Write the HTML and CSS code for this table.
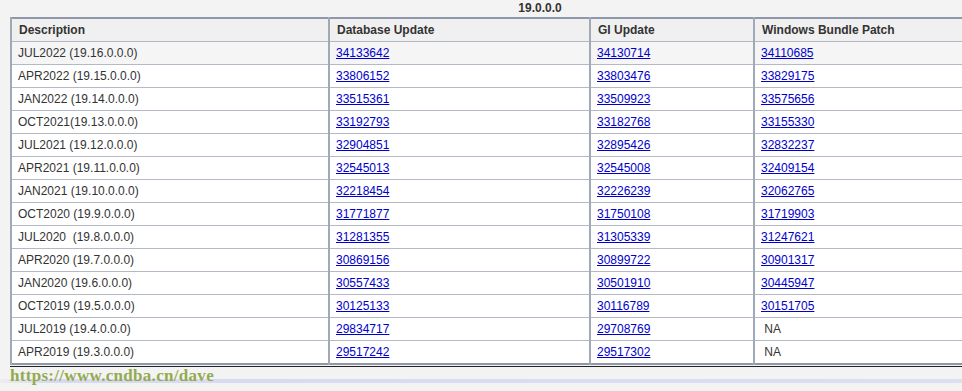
FILE: index.html
```html
<!DOCTYPE html>
<html>
<head>
<meta charset="utf-8">
<link rel="stylesheet" href="styles.css">
</head>
<body>
<div class="frame">
<div class="wrap">
  <div class="title">19.0.0.0</div>
  <table class="patches">
    <colgroup>
      <col class="c1"><col class="c2"><col class="c3"><col class="c4">
    </colgroup>
    <thead>
      <tr><th>Description</th><th>Database Update</th><th>GI Update</th><th>Windows Bundle Patch</th></tr>
    </thead>
    <tbody>
      <tr class="first"><td>JUL2022 (19.16.0.0.0)</td><td><a href="#">34133642</a></td><td><a href="#">34130714</a></td><td><a href="#">34110685</a></td></tr>
      <tr><td>APR2022 (19.15.0.0.0)</td><td><a href="#">33806152</a></td><td><a href="#">33803476</a></td><td><a href="#">33829175</a></td></tr>
      <tr><td>JAN2022 (19.14.0.0.0)</td><td><a href="#">33515361</a></td><td><a href="#">33509923</a></td><td><a href="#">33575656</a></td></tr>
      <tr><td>OCT2021(19.13.0.0.0)</td><td><a href="#">33192793</a></td><td><a href="#">33182768</a></td><td><a href="#">33155330</a></td></tr>
      <tr><td>JUL2021 (19.12.0.0.0)</td><td><a href="#">32904851</a></td><td><a href="#">32895426</a></td><td><a href="#">32832237</a></td></tr>
      <tr><td>APR2021 (19.11.0.0.0)</td><td><a href="#">32545013</a></td><td><a href="#">32545008</a></td><td><a href="#">32409154</a></td></tr>
      <tr><td>JAN2021 (19.10.0.0.0)</td><td><a href="#">32218454</a></td><td><a href="#">32226239</a></td><td><a href="#">32062765</a></td></tr>
      <tr><td>OCT2020 (19.9.0.0.0)</td><td><a href="#">31771877</a></td><td><a href="#">31750108</a></td><td><a href="#">31719903</a></td></tr>
      <tr><td>JUL2020&nbsp; (19.8.0.0.0)</td><td><a href="#">31281355</a></td><td><a href="#">31305339</a></td><td><a href="#">31247621</a></td></tr>
      <tr><td>APR2020 (19.7.0.0.0)</td><td><a href="#">30869156</a></td><td><a href="#">30899722</a></td><td><a href="#">30901317</a></td></tr>
      <tr><td>JAN2020 (19.6.0.0.0)</td><td><a href="#">30557433</a></td><td><a href="#">30501910</a></td><td><a href="#">30445947</a></td></tr>
      <tr><td>OCT2019 (19.5.0.0.0)</td><td><a href="#">30125133</a></td><td><a href="#">30116789</a></td><td><a href="#">30151705</a></td></tr>
      <tr><td>JUL2019 (19.4.0.0.0)</td><td><a href="#">29834717</a></td><td><a href="#">29708769</a></td><td>&nbsp;NA</td></tr>
      <tr><td>APR2019 (19.3.0.0.0)</td><td><a href="#">29517242</a></td><td><a href="#">29517302</a></td><td>&nbsp;NA</td></tr>
    </tbody>
  </table>
  <div class="rule"></div>
  <div class="mark">https://www.cndba.cn/dave</div>
</div>
</div>
</body>
</html>
```
FILE: styles.css
```css
html, body {
  margin: 0;
  padding: 0;
  background: #f3f3f3;
}
.frame {
  width: 962px;
  height: 391px;
  overflow: hidden;
  position: relative;
}
.wrap {
  width: 1060px;
  margin-left: 10px;
  font-family: "Liberation Sans", Arial, sans-serif;
  font-size: 12px;
  color: #333;
  position: relative;
}
.title {
  text-align: center;
  font-weight: bold;
  height: 17px;
  line-height: 16px;
  color: #333;
}
.patches {
  width: 1060px;
  border-collapse: collapse;
  table-layout: fixed;
  border: 2px solid #8f98aa;
  background: #fff;
}
.c1 { width: 318px; }
.c2 { width: 261px; }
.c3 { width: 164px; }
.c4 { width: 317px; }
.patches th, .patches td {
  border-style: solid;
  border-width: 1px 2px;
  border-color: #b4bac5 #a2a9b6;
  height: 22px;
  padding: 0 0 0 6px;
  line-height: 14px;
  text-align: left;
  vertical-align: middle;
  white-space: nowrap;
}
.patches th {
  background: #f0f0f0;
  font-weight: bold;
  color: #333;
  padding-left: 7px;
}
.patches tr.first td {
  background: #f5f5f5;
}
.patches a {
  color: #0000cc;
  text-decoration: underline;
}
.rule {
  height: 1px;
  margin-top: 1px;
  background: #222;
}
.mark {
  position: relative;
  font-family: "Liberation Serif", "Times New Roman", serif;
  font-weight: bold;
  font-size: 17px;
  color: #93ab4e;
  line-height: 18px;
  height: 18px;
  margin-top: 0;
  letter-spacing: 0.3px;
  z-index: 1;
}
.mark::before {
  content: "";
  position: absolute;
  left: -10px;
  width: 972px;
  top: 12px;
  height: 4px;
  background: linear-gradient(to right, rgba(210,210,238,0.2), #d8d8f0 50px, #dedef3);
  z-index: -1;
}
```
